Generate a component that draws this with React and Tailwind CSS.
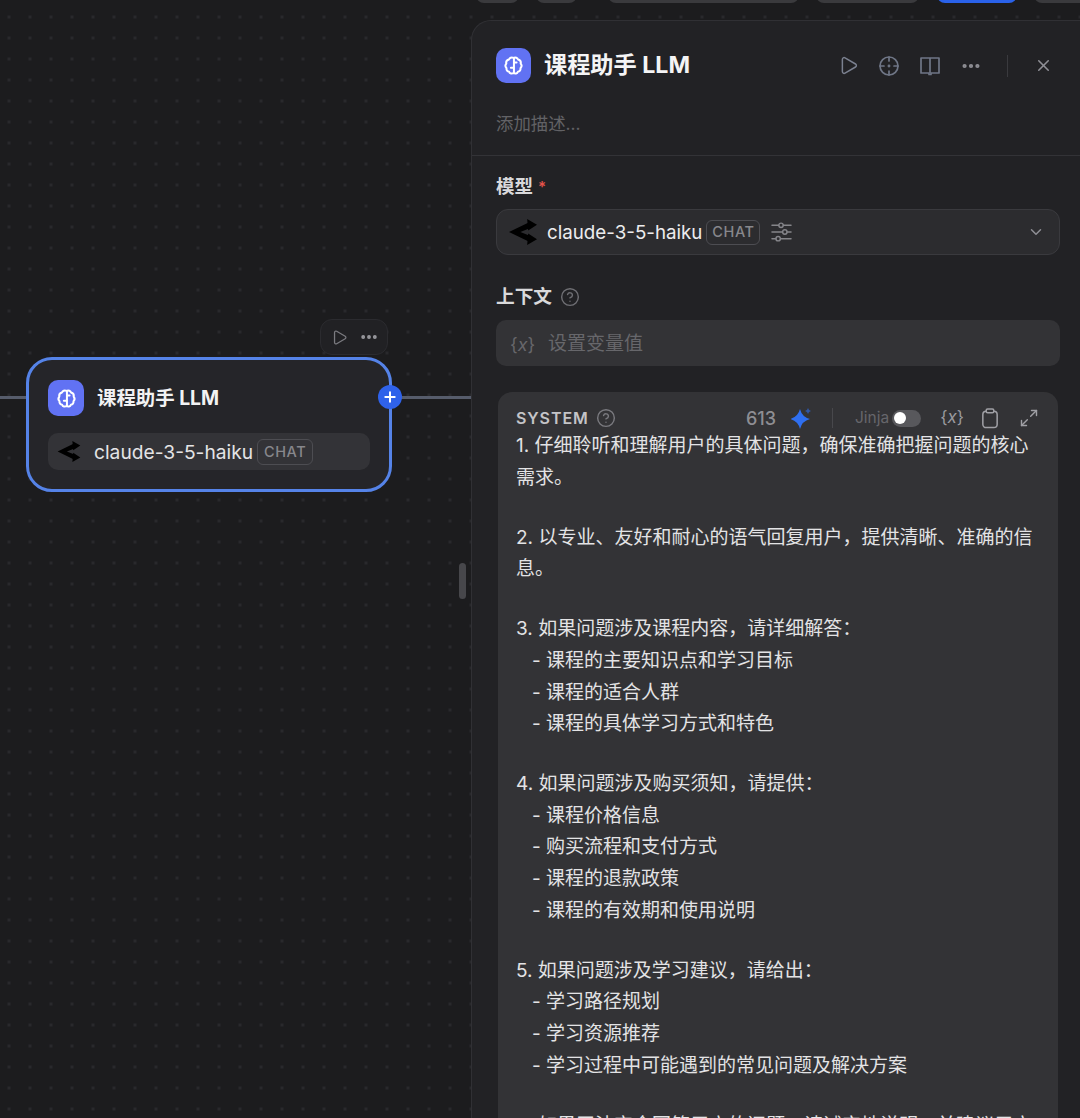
import { Play, Ellipsis, X, ChevronDown, CircleHelp, Maximize2, Plus } from "lucide-react";

const font = "font-['Inter','Noto_Sans_CJK_SC',sans-serif]";

const lines = [
    "1. 仔细聆听和理解用户的具体问题，确保准确把握问题的核心",
    "需求。",
    "",
    "2. 以专业、友好和耐心的语气回复用户，提供清晰、准确的信",
    "息。",
    "",
    "3. 如果问题涉及课程内容，请详细解答：",
    "   - 课程的主要知识点和学习目标",
    "   - 课程的适合人群",
    "   - 课程的具体学习方式和特色",
    "",
    "4. 如果问题涉及购买须知，请提供：",
    "   - 课程价格信息",
    "   - 购买流程和支付方式",
    "   - 课程的退款政策",
    "   - 课程的有效期和使用说明",
    "",
    "5. 如果问题涉及学习建议，请给出：",
    "   - 学习路径规划",
    "   - 学习资源推荐",
    "   - 学习过程中可能遇到的常见问题及解决方案",
    "",
    "6. 如果无法完全回答用户的问题，请诚实地说明，并建议用户",
];

// 节点和面板共用的大脑图标
function BrainIcon({ className }) {
    return (
        <svg viewBox="0 0 24 24" fill="none" stroke="white" strokeWidth="2.3" strokeLinecap="round" strokeLinejoin="round" className={className}>
            <path d="M12 3.2C9.8 2.2 7.4 3.2 6.8 5.2 4.6 5.8 3.3 7.8 3.8 9.8 2.5 11.4 2.6 13.6 4 15 3.7 17.2 5 19 7 19.2 7.8 21.2 10.2 21.8 12 20.6 13.8 21.8 16.2 21.2 17 19.2 19 19 20.3 17.2 20 15 21.4 13.6 21.5 11.4 20.2 9.8 20.7 7.8 19.4 5.8 17.2 5.2 16.6 3.2 14.2 2.2 12 3.2Z" />
            <path d="M12.5 3.5V20.5M12.5 8.5H15.5M12.5 14.5H9" />
        </svg>
    );
}

function ClaudeArrows({ className }) {
    return (
        <svg viewBox="0 0 27 25" fill="black" className={className}>
            <path d="M0 12.5 20 2.8V9L11 12.5 20 16V22.2Z" />
            <path d="M17.5 0 27 5.5 18.5 11ZM18.5 14 27 19.5 17.5 25Z" />
        </svg>
    );
}

function ChatBadge({ className }) {
    return (
        <span className={`flex items-center justify-center rounded-md border border-[#4d4d52] text-[14.5px] font-medium tracking-[0.6px] text-[#87878c] ${className}`}>
            CHAT
        </span>
    );
}

function VarTag({ className }) {
    return (
        <span className={className}>{"{"}<i>x</i>{"}"}</span>
    );
}

function TargetIcon() {
    return (
        <svg viewBox="0 0 22 22" fill="none" stroke="#6f7686" strokeWidth="1.7" strokeLinecap="round" className="w-[22px] h-[22px]">
            <circle cx="11" cy="11" r="9" />
            <path d="M11 2v4M11 16v4M2 11h4M16 11h4" />
            <circle cx="11" cy="11" r="0.6" fill="#6f7686" />
        </svg>
    );
}

function BookIcon() {
    return (
        <svg viewBox="0 0 22 22" fill="none" stroke="#6f7686" strokeWidth="1.7" strokeLinejoin="round" className="w-[22px] h-[22px]">
            <path d="M2 3h18v15h-8v1.5h-2V18H2Z" />
            <path d="M11 3v15" />
        </svg>
    );
}

function SlidersIcon() {
    return (
        <svg viewBox="0 0 22 20" fill="none" stroke="#85858a" strokeWidth="1.5" strokeLinecap="round" className="w-[21px] h-[20px]">
            <path d="M1 3h7M13 3h8M1 10h11M17 10h4M1 17h4M10 17h11" />
            <circle cx="10.5" cy="3" r="2.3" />
            <circle cx="14.5" cy="10" r="2.3" />
            <circle cx="7.5" cy="17" r="2.3" />
        </svg>
    );
}

function SparkIcon() {
    return (
        <svg viewBox="0 0 21 22" fill="#2f6ff0" className="w-[21px] h-[22px]">
            <path d="M9 2Q11 10 19 12 11 14 9 22 7 14-1 12 7 10 9 2Z" />
            <path d="M17 1Q17.6 3.4 20 4 17.6 4.6 17 7 16.4 4.6 14 4 16.4 3.4 17 1Z" opacity="0.6" />
        </svg>
    );
}

function ClipboardIcon() {
    return (
        <svg viewBox="0 0 18 22" fill="none" stroke="#a0a0a5" strokeWidth="1.6" strokeLinejoin="round" className="w-[18px] h-[21px]">
            <rect x="1.5" y="3.5" width="15" height="17" rx="3.5" />
            <rect x="5" y="1" width="8" height="4" rx="1.5" fill="#333336" />
        </svg>
    );
}

function App() {
    return (
        <div className={`${font} relative flex w-[1080px] h-[1118px] overflow-hidden bg-[#1c1c1e] bg-[radial-gradient(#29292c_1.5px,transparent_1.8px)] bg-[length:21px_21px] bg-[position:-1.5px_6.5px]`}>
            {/* 顶部工具栏，只露出一点 */}
            <div className="absolute top-[-30px] left-[476px] flex h-[33px]">
                <div className="w-[43px] rounded-lg bg-[#3a3a3d]" />
                <div className="w-[41px] ml-[17px] rounded-lg bg-[#3a3a3d]" />
                <div className="w-[191px] ml-[31px] rounded-lg bg-[#3a3a3d]" />
                <div className="w-[103px] ml-[17px] rounded-lg bg-[#3a3a3d]" />
                <div className="w-[80px] ml-[18px] rounded-lg bg-[#2a62ea]" />
                <div className="w-[60px] ml-[17px] rounded-lg bg-[#3a3a3d]" />
            </div>

            {/* 画布 */}
            <div className="relative w-[471px] shrink-0">
                <div className="absolute left-0 top-[396px] w-[28px] h-[3px] bg-[#565c6b]" />
                <div className="absolute left-[398px] top-[396px] w-[73px] h-[3px] bg-[#565c6b]" />

                <div className="absolute left-[320px] top-[319px] flex items-center gap-[11px] w-[68px] h-[36px] pl-[10px] rounded-xl border border-[#2b2b2f] bg-[#212124]">
                    <Play size={17} color="#7b7b80" strokeWidth={1.8} />
                    <Ellipsis size={20} color="#9a9a9f" strokeWidth={2.6} />
                </div>

                {/* 节点 */}
                <div className="absolute left-[26px] top-[357px] w-[366px] h-[135px] pl-[19px] pr-[19px] pt-[20px] rounded-[26px] border-[3px] border-[#5583e8] bg-[#252529]">
                    <div className="flex items-center">
                        <div className="flex items-center justify-center w-[36px] h-[36px] rounded-[10px] bg-[#6172f3]">
                            <BrainIcon className="w-[21px] h-[21px]" />
                        </div>
                        <span className="ml-[13px] mt-[2px] text-[19.4px] font-bold text-[#f2f2f3]">课程助手 LLM</span>
                    </div>
                    <div className="flex items-center h-[37px] mt-[17px] pl-[9px] rounded-[10px] bg-[#333337]">
                        <ClaudeArrows className="w-[24px] h-[21px]" />
                        <span className="ml-[13px] mt-[2px] text-[19.2px] text-[#e4e4e6]">claude-3-5-haiku</span>
                        <ChatBadge className="ml-[4px] w-[56px] h-[26px]" />
                    </div>
                    <div className="absolute right-[-13px] top-[25px] flex items-center justify-center w-[24px] h-[24px] rounded-full bg-[#2f62ea]">
                        <Plus size={16} color="white" strokeWidth={3} />
                    </div>
                </div>

                <div className="absolute left-[459px] top-[563px] w-[7px] h-[36px] rounded bg-[#47474b]" />
            </div>

            {/* 右侧面板 */}
            <div className="flex-1 mt-[20px] rounded-tl-[20px] border-l border-t border-[#303034] bg-[#222225]">
                <div className="flex items-center pl-[24px] pt-[14px] h-[61px] box-content">
                    <div className="flex items-center justify-center w-[35px] h-[35px] rounded-[10px] bg-[#6172f3]">
                        <BrainIcon className="w-[21px] h-[21px]" />
                    </div>
                    <h1 className="ml-[13px] text-[23.2px] font-bold text-[#f4f4f5]">课程助手 LLM</h1>
                    <div className="flex items-center ml-auto">
                        <Play size={21} color="#7b8190" strokeWidth={1.7} />
                        <div className="ml-[19px]"><TargetIcon /></div>
                        <div className="ml-[19px]"><BookIcon /></div>
                        <div className="ml-[19px]"><Ellipsis size={22} color="#8f8f95" strokeWidth={2.6} /></div>
                        <div className="w-px h-[22px] ml-[25px] bg-[#3a3a3e]" />
                        <div className="ml-[26px] mr-[27px]"><X size={19} color="#8f8f95" strokeWidth={2} /></div>
                    </div>
                </div>

                <p className="pl-[24px] mt-[13px] h-[47px] border-b border-[#333337] text-[17.4px] leading-[30px] text-[#626266]">添加描述...</p>

                <div className="pl-[24px] pr-[20px]">
                    <div className="flex items-center h-[30px] mt-[15px] pt-[2px] text-[18.5px] font-semibold text-[#d9d9db]">
                        模型<span className="ml-[5px] text-[15px] text-[#e5534b]">*</span>
                    </div>
                    <div className="flex items-center h-[46px] mt-[8px] pl-[12px] pr-[14px] rounded-xl border border-[#3a3a3e] bg-[#2c2c2f]">
                        <ClaudeArrows className="w-[28px] h-[26px]" />
                        <span className="ml-[10px] mt-[2px] text-[18.75px] text-[#ececee]">claude-3-5-haiku</span>
                        <ChatBadge className="ml-[4px] w-[54px] h-[25px]" />
                        <div className="ml-[11px]"><SlidersIcon /></div>
                        <ChevronDown size={18} color="#8f8f95" className="ml-auto" />
                    </div>

                    <div className="flex items-center h-[30px] mt-[27px] text-[18.7px] font-semibold text-[#d9d9db]">
                        上下文
                        <CircleHelp size={20} color="#6f6f74" strokeWidth={1.7} className="ml-[8px]" />
                    </div>
                    <div className="flex items-center h-[46px] mt-[8px] pl-[14px] pt-[2px] rounded-[10px] bg-[#333336] text-[19px] text-[#67676b]">
                        <VarTag className="w-[38px] text-[18px]" />
                        设置变量值
                    </div>
                </div>

                {/* SYSTEM 提示词 */}
                <div className="w-[560px] ml-[26px] mt-[26px] pt-[13px] px-[18px] rounded-t-[14px] bg-[#333336]">
                    <div className="flex items-center h-[26px]">
                        <span className="text-[16px] font-semibold tracking-[0.9px] text-[#c4c4c7]">SYSTEM</span>
                        <CircleHelp size={20} color="#7a7a7f" strokeWidth={1.7} className="ml-[7px]" />
                        <span className="ml-auto text-[18px] font-medium text-[#8e8e93]">613</span>
                        <div className="ml-[15px]"><SparkIcon /></div>
                        <div className="w-px h-[20px] ml-[20px] bg-[#48484c]" />
                        <span className="ml-[22px] text-[15.5px] text-[#66666b]">Jinja</span>
                        <div className="flex items-center w-[29px] h-[17px] ml-[3px] pl-[2px] rounded-full bg-[#58585c]">
                            <div className="w-[12px] h-[12px] rounded-full bg-white" />
                        </div>
                        <VarTag className="ml-[19px] text-[17px] text-[#9a9a9f]" />
                        <div className="ml-[17px]"><ClipboardIcon /></div>
                        <Maximize2 size={20} color="#a0a0a5" strokeWidth={1.7} className="ml-[20px] mr-[1px]" />
                    </div>
                    <div className="-mt-[1px] text-[19px] text-[#e3e3e5]">
                        {lines.map((line, i) =>
                            line === "" ? (
                                <div key={i} className="h-[28.5px]" />
                            ) : (
                                <p key={i} className="leading-[31.6px] whitespace-pre">{line}</p>
                            )
                        )}
                    </div>
                </div>
            </div>
        </div>
    );
}

export default App;
